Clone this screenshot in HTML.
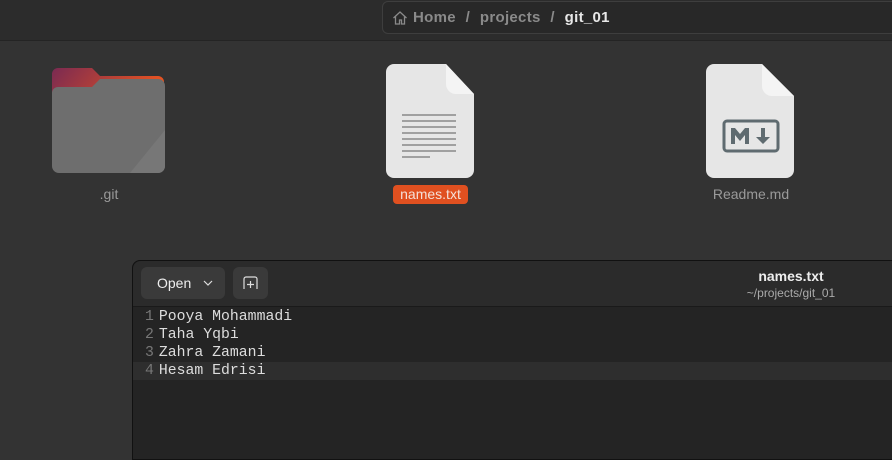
<!DOCTYPE html>
<html><head><style>
*{margin:0;padding:0;box-sizing:border-box}
body{width:892px;height:452px;overflow:hidden;background:#333;font-family:"Liberation Sans",sans-serif;position:relative}
.top{position:absolute;left:0;top:0;width:892px;height:41px;background:#2c2c2c;border-bottom:1px solid #242424}
.crumb{position:absolute;left:382px;top:1px;width:520px;height:33px;border:1px solid #3e3e3e;border-radius:6px;background:#282828;color:#8a8a8a;font-weight:bold;font-size:15px;line-height:31px;padding-left:30px;letter-spacing:0.3px}
.crumb b{color:#e8e8e8}
.crumb i{font-style:normal;display:inline-block;width:24px;text-align:center}
.lbl{position:absolute;font-size:14px;color:#9a9a9a;text-align:center}
.ed{position:absolute;left:132px;top:260px;width:770px;height:200px;background:#242424;border:1px solid #111;border-radius:8px 0 0 0}
.hdr{height:46px;background:#2b2b2b;border-bottom:1px solid #1a1a1a;border-radius:8px 0 0 0;position:relative}
.btn{position:absolute;top:6px;height:32px;background:#3a3a3a;border-radius:6px;color:#eee;font-size:14px;line-height:32px}
.code{font-family:"Liberation Mono","DejaVu Sans Mono",monospace;font-size:14.8px;line-height:18px;color:#ddd;padding-top:1px}
.code div{height:18px;padding-left:12px;white-space:pre}
.code span{color:#777;margin-right:5px}
</style></head><body>
<div class="top"></div>
<div class="crumb"><svg style="position:absolute;left:9px;top:8px" width="16" height="16" viewBox="0 0 16 16"><path d="M1.5 8 8 2l6.5 6M3.5 6.5V14h4v-4h2v4h3V6.5" fill="none" stroke="#8a8a8a" stroke-width="1.3"/></svg>Home<i>/</i>projects<i>/</i><b>git_01</b></div>

<svg style="position:absolute;left:52px;top:68px" width="114" height="106" viewBox="0 0 114 106">
<defs><linearGradient id="g" x1="0" y1="0" x2="1" y2="0.3"><stop offset="0" stop-color="#7a2a52"/><stop offset="1" stop-color="#e95420"/></linearGradient></defs>
<path d="M6 0H40l8 8H106a6 6 0 0 1 6 6V40H0V6a6 6 0 0 1 6-6z" fill="url(#g)"/>
<path d="M6 19H40l8-8H106a7 7 0 0 1 7 7V98a7 7 0 0 1-7 7H7a7 7 0 0 1-7-7V25a6 6 0 0 1 6-6z" fill="#6e6e6e"/>
<path d="M113 62V98a7 7 0 0 1-7 7H78z" fill="#777"/>
</svg>
<div class="lbl" style="left:69px;top:186px;width:80px">.git</div>

<svg style="position:absolute;left:386px;top:64px" width="90" height="114" viewBox="0 0 90 114">
<path d="M8 0H60l28 30V106a8 8 0 0 1-8 8H8a8 8 0 0 1-8-8V8a8 8 0 0 1 8-8z" fill="#e6e6e6"/>
<path d="M60 0v20a10 10 0 0 0 10 10h18z" fill="#f4f4f4"/>
<g stroke="#a0a0a0" stroke-width="2"><path d="M16 51H70M16 57H70M16 63H70M16 69H70M16 75H70M16 81H70M16 87H70M16 93H44"/></g>
</svg>
<div style="position:absolute;left:393px;top:185px;width:75px;height:19px;background:#e05020;border-radius:4px;color:#f4e0d8;font-size:14px;line-height:19px;text-align:center">names.txt</div>

<svg style="position:absolute;left:706px;top:64px" width="90" height="114" viewBox="0 0 90 114">
<path d="M8 0H56l32 32V106a8 8 0 0 1-8 8H8a8 8 0 0 1-8-8V8a8 8 0 0 1 8-8z" fill="#e6e6e6"/>
<path d="M56 0v22a10 10 0 0 0 10 10h22z" fill="#f4f4f4"/>
<rect x="18" y="57" width="54" height="30" rx="3" fill="none" stroke="#5f6b70" stroke-width="3"/>
<path d="M25 80V64h4l5 6 5-6h4v16h-4v-9l-5 6-5-6v9z" fill="#5f6b70"/>
<path d="M55 64v9h-5l7 7 7-7h-5v-9z" fill="#5f6b70"/>
</svg>
<div class="lbl" style="left:701px;top:186px;width:100px">Readme.md</div>

<div class="ed">
<div class="hdr">
<div class="btn" style="left:8px;width:84px;padding-left:16px">Open<svg style="position:absolute;left:62px;top:13px" width="10" height="6" viewBox="0 0 10 6"><path d="M1 1l4 4 4-4" fill="none" stroke="#ddd" stroke-width="1.2"/></svg></div>
<div class="btn" style="left:100px;width:35px"><svg style="position:absolute;left:10px;top:9px" width="15" height="14" viewBox="0 0 15 14"><path d="M1 13V3a2 2 0 0 1 2-2h9a2 2 0 0 1 2 2v10M7.5 5v7M4 8.5h7" fill="none" stroke="#ddd" stroke-width="1.2"/></svg></div>
<div style="position:absolute;left:558px;top:7px;width:200px;text-align:center;color:#eee;font-weight:bold;font-size:14px">names.txt</div>
<div style="position:absolute;left:558px;top:25px;width:200px;text-align:center;color:#aaa;font-size:12px">~/projects/git_01</div>
</div>
<div class="code">
<div><span>1</span>Pooya Mohammadi</div>
<div><span>2</span>Taha Yqbi</div>
<div><span>3</span>Zahra Zamani</div>
<div style="background:#2e2e2e"><span>4</span>Hesam Edrisi</div>
</div>
</div>
</body></html>
